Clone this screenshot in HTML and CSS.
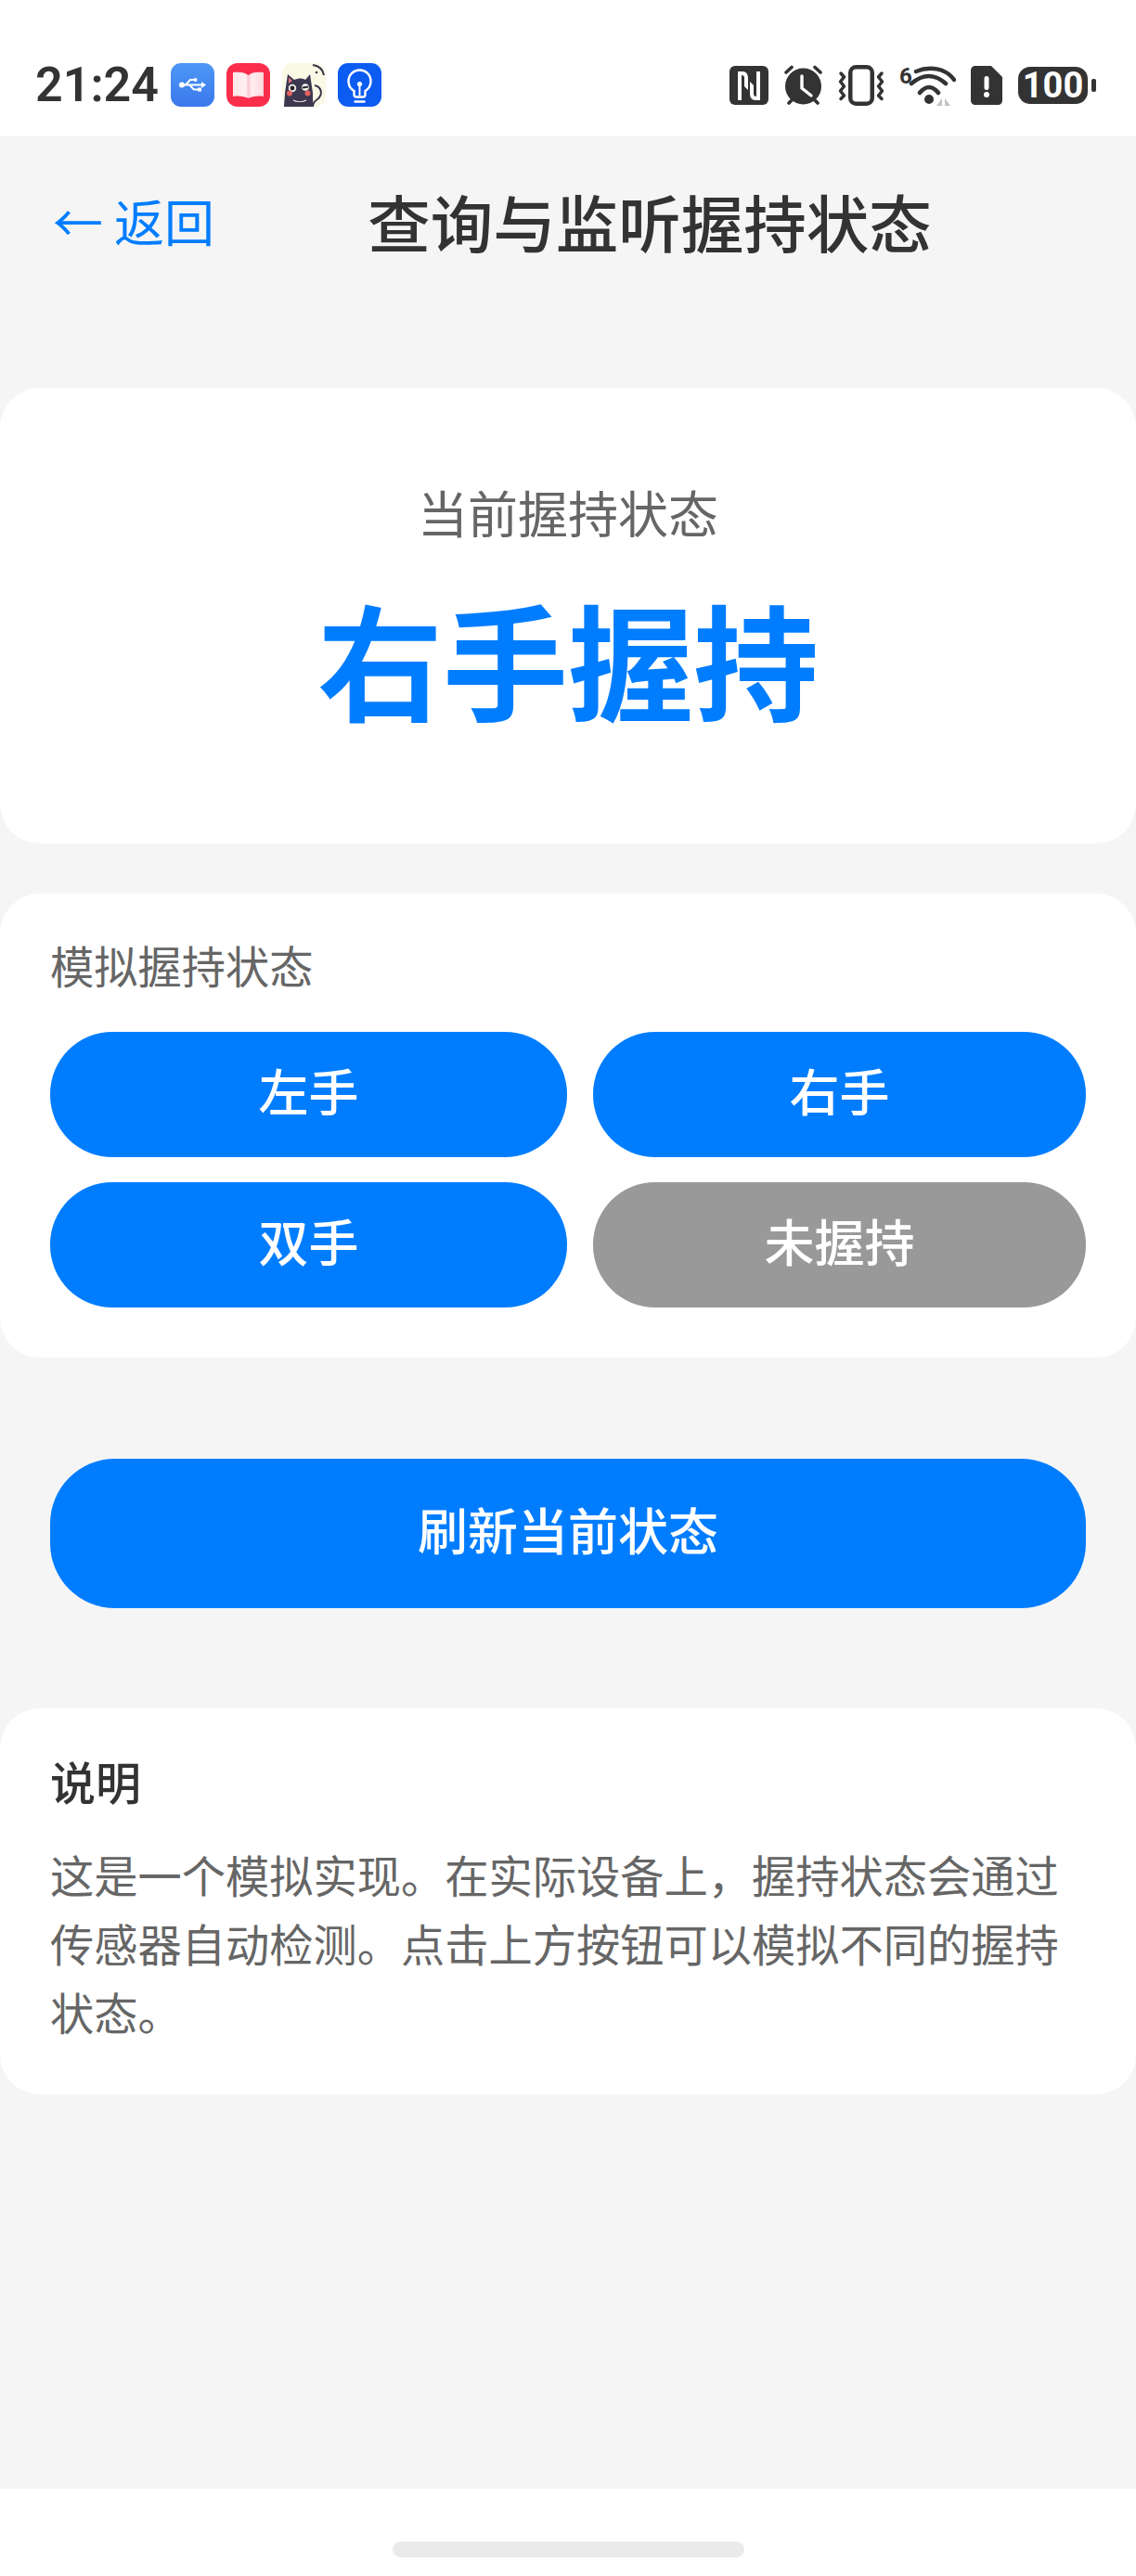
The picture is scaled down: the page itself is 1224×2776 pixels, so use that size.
FILE: index.html
```html
<!DOCTYPE html>
<html lang="zh-CN">
<head>
    <meta charset="UTF-8">
    <meta name="viewport" content="width=device-width, initial-scale=1.0">
    <title>查询与监听握持状态</title>
    <link rel="stylesheet" href="styles.css">
</head>
<body>
    <div class="phone">
        <div class="status-bar">
            <span class="time">21:24</span>
            <div class="app-icons">
                <svg class="app-icon" viewBox="0 0 47 47">
                    <defs><linearGradient id="usb-bg" x1="0" y1="0" x2="0" y2="1"><stop offset="0" stop-color="#4d97f6"/><stop offset="1" stop-color="#3b78ec"/></linearGradient></defs>
                    <rect width="47" height="47" rx="11" fill="url(#usb-bg)"/>
                    <path d="M11 23.500H36M16 23.500L21 18H26M20 23.500L25 28.500H30" fill="none" stroke="#fff" stroke-width="2"/>
                    <circle cx="12" cy="23.500" r="3" fill="#fff"/>
                    <path d="M33 20L38 23.500L33 27Z" fill="#fff"/>
                    <circle cx="26.500" cy="18" r="2" fill="#fff"/>
                    <rect x="29" y="26.500" width="4" height="4" fill="#fff"/>
                </svg>
                <svg class="app-icon" viewBox="0 0 47 47">
                    <defs><linearGradient id="book-fold" x1="0" y1="0" x2="1" y2="0"><stop offset="0" stop-color="#ffe6e8"/><stop offset=".42" stop-color="#fff0f1"/><stop offset=".5" stop-color="#fbc9d0"/><stop offset=".62" stop-color="#ffeef0"/><stop offset="1" stop-color="#fdd9dd"/></linearGradient></defs>
                    <rect width="47" height="47" rx="12" fill="#fb2d4b"/>
                    <path d="M7 10C14 9 20 10 23.500 13C27 10 33 9 40 10V36C33 35 27 36 23.500 38C20 36 14 35 7 36Z" fill="url(#book-fold)"/>
                </svg>
                <svg class="app-icon" viewBox="0 0 47 47">
                    <rect width="47" height="47" rx="11" fill="#f9f9e6"/>
                    <path d="M33 2C40 3 44 7 45 13" fill="none" stroke="#3a3648" stroke-width="2"/>
                    <path d="M35 24C43 26 44 34 38 39C35 41 33 44 33 47" fill="none" stroke="#3a3648" stroke-width="2"/>
                    <circle cx="37" cy="10" r="1.300" fill="#3a3648"/>
                    <path d="M3 32L6 12L13 18C18 16 22 16 25 18L30 12L33 32C33 38 33 42 34 47H2C2 42 3 37 3 32Z" fill="#3d3850"/>
                    <path d="M7 15.500L7 22L11 19Z" fill="#e0727c"/>
                    <circle cx="11" cy="27" r="4.200" fill="#f5f3ea"/>
                    <circle cx="11" cy="27" r="2.400" fill="#24212e"/>
                    <circle cx="25" cy="26" r="3.800" fill="#f5f3ea"/>
                    <path d="M22 26.500L28 25.500" stroke="#24212e" stroke-width="1.800"/>
                    <circle cx="8" cy="32.500" r="3" fill="#e2605f"/>
                    <circle cx="27.500" cy="32.500" r="3" fill="#e2605f"/>
                    <path d="M12 40C16 42 22 42 26 40" fill="none" stroke="#f5f3ea" stroke-width="1.100"/>
                </svg>
                <svg class="app-icon" viewBox="0 0 47 47">
                    <rect width="47" height="47" rx="11" fill="#0d5cf2"/>
                    <path d="M17.500 34V30C14 28 11.500 24 11.500 19.500C11.500 12.500 17 7.500 23.500 7.500C30 7.500 35.500 12.500 35.500 19.500C35.500 24 33 28 29.500 30V34C29.500 35.500 28.500 36.500 27 36.500H20C18.500 36.500 17.500 35.500 17.500 34Z" fill="none" stroke="#fff" stroke-width="2.400"/>
                    <path d="M18.500 41.500H28.500" stroke="#fff" stroke-width="2.400" stroke-linecap="round"/>
                    <path d="M23.500 23V35" stroke="#fff" stroke-width="2"/>
                    <circle cx="23.500" cy="22.500" r="2.600" fill="#fff"/>
                </svg>
            </div>
            <div class="sys-icons">
                <svg class="ic-nfc" viewBox="0 0 42 42">
                    <rect width="42" height="42" rx="6" fill="#333"/>
                    <path d="M9 6H14C19 6 20 10 20 14V26L16 22V13C16 11 15 10 13 10V37H9Z" fill="#fff"/>
                    <path d="M9 6H14C19 6 20 10 20 14V26L16 22V13C16 11 15 10 13 10V37H9Z" fill="#fff" transform="rotate(180 21 21.500)"/>
                </svg>
                <svg class="ic-alarm" viewBox="0 0 43 43">
                    <path d="M3 8L9 2.500M40 8L34 2.500M6 41L10 37M37 41L33 37" stroke="#333" stroke-width="3.600" stroke-linecap="round"/>
                    <circle cx="21.500" cy="23" r="19.500" fill="#333"/>
                    <path d="M20 12V25L30 33" fill="none" stroke="#fff" stroke-width="3.400" stroke-linecap="round"/>
                </svg>
                <svg class="ic-vibrate" viewBox="0 0 50 44">
                    <rect x="13.250" y="2.250" width="23.500" height="39.500" rx="6" fill="none" stroke="#333" stroke-width="4.500"/>
                    <path d="M3 9L6.500 13L2.500 18L6.500 23L2.500 28L6.500 33L3 36.500" fill="none" stroke="#333" stroke-width="3.500" stroke-linecap="round" stroke-linejoin="round"/>
                    <path d="M47 9L43.500 13L47.500 18L43.500 23L47.500 28L43.500 33L47 36.500" fill="none" stroke="#333" stroke-width="3.500" stroke-linecap="round" stroke-linejoin="round"/>
                </svg>
                <div class="ic-wifi">
                    <span class="wifi-six">6</span>
                    <svg viewBox="0 0 61 45">
                        <path d="M18 7C32 1 50 3 59 16M13 20Q32 4 50 20M22 30Q32 18 42 30" fill="none" stroke="#333" stroke-width="4.500" stroke-linecap="round"/>
                        <circle cx="32" cy="37" r="5" fill="#333"/>
                        <path d="M46 36V44H40ZM49 36V44H55Z" fill="#c4c4c4"/>
                    </svg>
                </div>
                <svg class="ic-sim" viewBox="0 0 34 42">
                    <path d="M5 0H22L34 12V37C34 40 32 42 29 42H5C2 42 0 40 0 37V5C0 2 2 0 5 0Z" fill="#333"/>
                    <rect x="14.500" y="11" width="5" height="15" rx="2.500" fill="#fff"/>
                    <circle cx="17" cy="31" r="3" fill="#fff"/>
                </svg>
                <div class="ic-battery">
                    <span class="battery-level">100</span>
                    <span class="battery-tip"></span>
                </div>
            </div>
        </div>

        <div class="screen">
            <div class="header">
                <a class="back"><span class="back-arrow">←</span> 返回</a>
                <h1 class="page-title">查询与监听握持状态</h1>
            </div>

            <div class="card state-card">
                <p class="state-label">当前握持状态</p>
                <p class="state-value">右手握持</p>
            </div>

            <div class="card sim-card">
                <p class="sim-title">模拟握持状态</p>
                <div class="sim-grid">
                    <button class="btn">左手</button>
                    <button class="btn">右手</button>
                    <button class="btn">双手</button>
                    <button class="btn btn-off">未握持</button>
                </div>
            </div>

            <button class="btn btn-refresh">刷新当前状态</button>

            <div class="card note-card">
                <h2 class="note-title">说明</h2>
                <p class="note-text">这是一个模拟实现。在实际设备上，握持状态会通过传感器自动检测。点击上方按钮可以模拟不同的握持状态。</p>
            </div>
        </div>

        <div class="nav-bar">
            <div class="home-pill"></div>
        </div>
    </div>
</body>
</html>
```

FILE: styles.css
```css
* {
    box-sizing: border-box;
}
html, body {
    margin: 0;
    padding: 0;
}
body {
    font-family: "Noto Sans CJK SC", "Noto Sans", sans-serif;
    background-color: #f5f5f5;
}
p, h1, h2 {
    margin: 0;
    font-weight: 400;
}
.phone {
    width: 1224px;
    height: 2776px;
    display: flex;
    flex-direction: column;
    overflow: hidden;
}

/* status bar */
.status-bar {
    height: 147px;
    flex-shrink: 0;
    background: #fff;
    display: flex;
    align-items: flex-start;
    padding: 68px 0 0 38px;
}
.time {
    width: 146px;
    font-family: Roboto, sans-serif;
    font-size: 52px;
    font-weight: 600;
    line-height: 47px;
    color: #333;
}
.app-icons {
    display: flex;
    gap: 13px;
}
.app-icon {
    width: 47px;
    height: 47px;
    display: block;
}
.sys-icons {
    margin-left: 375px;
    display: flex;
    align-items: flex-start;
}
.ic-nfc {
    width: 42px;
    height: 42px;
    margin-top: 3px;
}
.ic-alarm {
    width: 43px;
    height: 43px;
    margin: 2px 0 0 16px;
}
.ic-vibrate {
    width: 50px;
    height: 44px;
    margin: 2px 0 0 16px;
}
.ic-wifi {
    width: 61px;
    height: 45px;
    margin: 2px 0 0 16px;
    position: relative;
}
.ic-wifi svg {
    width: 61px;
    height: 45px;
    display: block;
}
.wifi-six {
    position: absolute;
    left: 0;
    top: 2px;
    font-family: Roboto, sans-serif;
    font-size: 24px;
    font-weight: 700;
    line-height: 20px;
    color: #333;
}
.ic-sim {
    width: 34px;
    height: 42px;
    margin: 3px 0 0 16px;
}
.ic-battery {
    display: flex;
    align-items: center;
    margin: 4px 0 0 17px;
}
.battery-level {
    width: 75px;
    height: 40px;
    border-radius: 13px;
    background: #333;
    color: #fff;
    font-family: Roboto, sans-serif;
    font-size: 38px;
    font-weight: 700;
    line-height: 40px;
    text-align: center;
}
.battery-tip {
    width: 5px;
    height: 14px;
    margin-left: 4px;
    border-radius: 2px;
    background: #333;
}

/* page */
.screen {
    flex: 1;
    background: #f5f5f5;
}
.header {
    display: flex;
    align-items: center;
    height: 189px;
    padding: 0 54px 8px 57px;
    margin-bottom: 82px;
}
.back {
    width: 173px;
    font-size: 54px;
    line-height: 60px;
    color: #007dff;
    white-space: nowrap;
}
.back-arrow {
    font-family: "Noto Sans CJK SC", sans-serif;
}
.page-title {
    flex: 1;
    font-size: 67.500px;
    font-weight: 500;
    line-height: 80px;
    color: #333;
    text-align: center;
}
.card {
    background: #fff;
    border-radius: 43px;
}
.state-card {
    height: 491px;
    padding-top: 96px;
    text-align: center;
}
.state-label {
    font-size: 54px;
    line-height: 76px;
    color: #666;
}
.state-value {
    margin-top: 33px;
    font-size: 135px;
    font-weight: 700;
    line-height: 170px;
    color: #007dff;
}
.sim-card {
    height: 500px;
    margin-top: 54px;
    padding: 44px 54px 0;
}
.sim-title {
    font-size: 47.250px;
    line-height: 66px;
    color: #666;
}
.sim-grid {
    margin-top: 39px;
    display: grid;
    grid-template-columns: 557px 531px;
    grid-auto-rows: 135px;
    gap: 27px 28px;
}
.btn {
    border: none;
    padding: 0 0 10px;
    border-radius: 67px;
    background: #007dff;
    color: #fff;
    font-family: inherit;
    font-size: 54px;
    font-weight: 500;
    cursor: pointer;
}
.btn-off {
    background: #999;
}
.btn-refresh {
    display: block;
    width: 1116px;
    height: 161px;
    margin: 109px 54px 0;
    border-radius: 70px;
}
.note-card {
    height: 416px;
    margin-top: 108px;
    padding: 44px 54px 0;
}
.note-title {
    font-size: 49px;
    font-weight: 500;
    line-height: 68px;
    color: #333;
}
.note-text {
    margin-top: 30px;
    font-size: 47.250px;
    line-height: 74px;
    color: #666;
}

/* bottom nav */
.nav-bar {
    height: 94px;
    flex-shrink: 0;
    background: #fff;
    padding-top: 57px;
}
.home-pill {
    width: 379px;
    height: 17px;
    margin: 0 auto;
    border-radius: 9px;
    background: #eaeaea;
}
```
